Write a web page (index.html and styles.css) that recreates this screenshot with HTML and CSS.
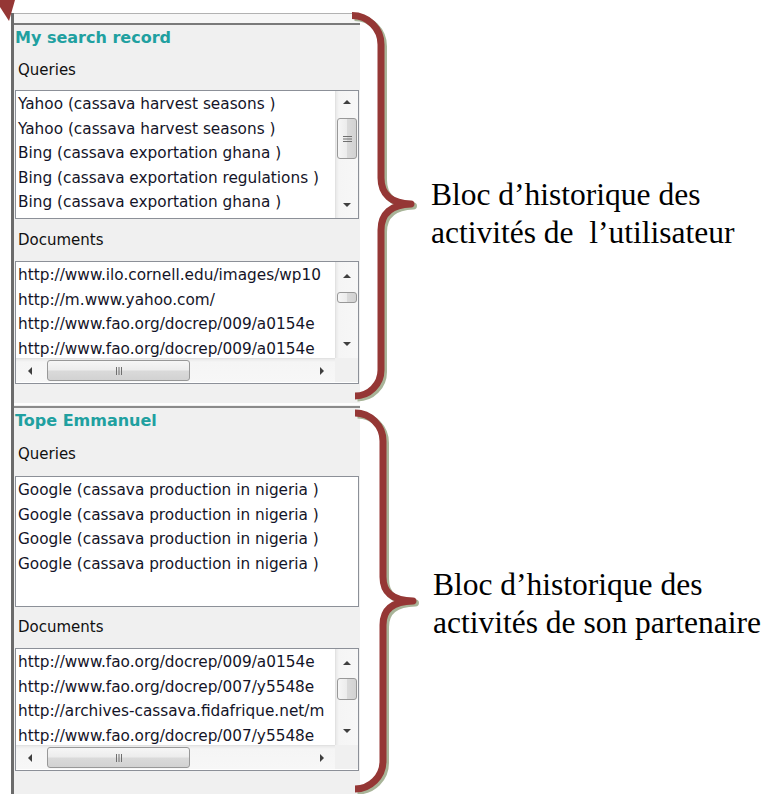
FILE: index.html
```html
<!DOCTYPE html>
<html lang="fr">
<head>
<meta charset="utf-8">
<title>Bloc d'historique</title>
<link rel="stylesheet" href="styles.css">
</head>
<body>
<svg class="arrow" width="16" height="22" viewBox="0 0 16 22"><polygon points="0,0 15,0 9,21 0,7" fill="#953735"/></svg>
<div class="figure">
  <div class="row row-1">
    <section class="panel">
      <div class="panel-top"></div>
      <h2 class="title">My search record</h2>
      <div class="label l-q1">Queries</div>
      <div class="listbox lb-q1">
        <ul class="items">
          <li>Yahoo (cassava harvest seasons )</li>
          <li>Yahoo (cassava harvest seasons )</li>
          <li>Bing (cassava exportation ghana )</li>
          <li>Bing (cassava exportation regulations )</li>
          <li>Bing (cassava exportation ghana )</li>
          <li>Bing (cassava exportation regulations )</li>
        </ul>
        <div class="vscroll">
          <div class="sbtn up-q1"><span class="tri tri-up"></span></div>
          <div class="thumb-v thumb-q1"><svg width="9" height="8" viewBox="0 0 9 8"><path d="M0 1.5h9M0 4h9M0 6.5h9" stroke="#6f6f6f" stroke-width="1"/></svg></div>
          <div class="spacer"></div>
          <div class="sbtn down-q1"><span class="tri tri-down"></span></div>
        </div>
      </div>
      <div class="label l-d1">Documents</div>
      <div class="listbox lb-docs">
        <div class="docs-body">
          <ul class="items docs">
            <li>http://www.ilo.cornell.edu/images/wp10</li>
            <li>http://m.www.yahoo.com/</li>
            <li>http://www.fao.org/docrep/009/a0154e</li>
            <li>http://www.fao.org/docrep/009/a0154e</li>
          </ul>
          <div class="vscroll">
            <div class="sbtn up-d"><span class="tri tri-up"></span></div>
            <div class="thumb-v thumb-d1"></div>
            <div class="spacer"></div>
            <div class="sbtn down-d"><span class="tri tri-down"></span></div>
          </div>
        </div>
        <div class="hscroll-row">
          <div class="hscroll">
            <div class="hbtn hbtn-left"><span class="tri tri-left"></span></div>
            <div class="thumb-h"><svg width="8" height="8" viewBox="0 0 8 8"><path d="M1.5 0v8M4 0v8M6.5 0v8" stroke="#6f6f6f" stroke-width="1"/></svg></div>
            <div class="spacer"></div>
            <div class="hbtn hbtn-right"><span class="tri tri-right"></span></div>
          </div>
          <div class="corner"></div>
        </div>
      </div>
    </section>
    <svg class="brace" width="85" height="403" viewBox="0 0 85 403">
      <path d="M7 15.5 A29 29 0 0 1 36 44.5 V178 C36 194 46 203.5 66 204 C46 204.5 36 214 36 230 V370 A26 26 0 0 1 10 396" transform="translate(2.5 2)" fill="none" stroke="#a8b498" stroke-width="7" stroke-linejoin="round"/>
      <path d="M7 15.5 A29 29 0 0 1 36 44.5 V178 C36 194 46 203.5 66 204 C46 204.5 36 214 36 230 V370 A26 26 0 0 1 10 396" fill="none" stroke="#953735" stroke-width="7" stroke-linejoin="round"/>
    </svg>
    <p class="note note-1">Bloc d’historique des<br>activités de&nbsp; l’utilisateur</p>
  </div>
  <div class="row row-2">
    <section class="panel">
      <div class="panel-top panel-top-2"></div>
      <h2 class="title">Tope Emmanuel</h2>
      <div class="label l-q2">Queries</div>
      <div class="listbox lb-q2">
        <ul class="items">
          <li>Google (cassava production in nigeria )</li>
          <li>Google (cassava production in nigeria )</li>
          <li>Google (cassava production in nigeria )</li>
          <li>Google (cassava production in nigeria )</li>
        </ul>
      </div>
      <div class="label l-d2">Documents</div>
      <div class="listbox lb-docs">
        <div class="docs-body">
          <ul class="items docs">
            <li>http://www.fao.org/docrep/009/a0154e</li>
            <li>http://www.fao.org/docrep/007/y5548e</li>
            <li>http://archives-cassava.fidafrique.net/m</li>
            <li>http://www.fao.org/docrep/007/y5548e</li>
          </ul>
          <div class="vscroll">
            <div class="sbtn up-d"><span class="tri tri-up"></span></div>
            <div class="thumb-v thumb-d2"></div>
            <div class="spacer"></div>
            <div class="sbtn down-d"><span class="tri tri-down"></span></div>
          </div>
        </div>
        <div class="hscroll-row">
          <div class="hscroll">
            <div class="hbtn hbtn-left"><span class="tri tri-left"></span></div>
            <div class="thumb-h"><svg width="8" height="8" viewBox="0 0 8 8"><path d="M1.5 0v8M4 0v8M6.5 0v8" stroke="#6f6f6f" stroke-width="1"/></svg></div>
            <div class="spacer"></div>
            <div class="hbtn hbtn-right"><span class="tri tri-right"></span></div>
          </div>
          <div class="corner"></div>
        </div>
      </div>
    </section>
    <svg class="brace" width="85" height="391" viewBox="0 0 85 391">
      <path d="M10 10 A28 28 0 0 1 38 38 V174 C38 190 48 197.5 68 198 C48 198.5 38 206 38 222 V358 A28 28 0 0 1 10 386" transform="translate(2.5 2)" fill="none" stroke="#a8b498" stroke-width="7" stroke-linejoin="round"/>
      <path d="M10 10 A28 28 0 0 1 38 38 V174 C38 190 48 197.5 68 198 C48 198.5 38 206 38 222 V358 A28 28 0 0 1 10 386" fill="none" stroke="#953735" stroke-width="7" stroke-linejoin="round"/>
    </svg>
    <p class="note note-2">Bloc d’historique des<br>activités de son partenaire</p>
  </div>
</div>
</body>
</html>
```
FILE: styles.css
```css
* { box-sizing: border-box; }
html, body { margin: 0; padding: 0; background: #fff; overflow: hidden; }
body {
  width: 774px;
  height: 794px;
  position: relative;
  font-family: "DejaVu Sans", Verdana, sans-serif;
  color: #111;
}
.arrow { position: absolute; left: 0; top: 0; z-index: 2; }

.figure { padding-left: 11px; }
.row {
  display: grid;
  grid-template-columns: 349px 70px 1fr;
  align-items: start;
}
.brace { display: block; margin-left: -15px; }

.panel {
  background: #f0f0f0;
  border-left: 3px solid #6b6b6b;
}
.row-1 .panel { margin-top: 13px; padding-bottom: 19px; }
.row-2 .panel { padding-bottom: 23px; }

.panel-top {
  height: 12px;
  border-top: 1px solid #b2b2b2;
  border-bottom: 2px solid #7a7a7a;
  background: #f6f6f6;
}
.panel-top-2 {
  height: 5px;
  border-top: 2px solid #fdfdfd;
  border-bottom: 2px solid #8a8a8a;
  background: #f0f0f0;
}

.title {
  margin: 0;
  height: 25px;
  line-height: 25px;
  padding-left: 1px;
  font-size: 16px;
  font-weight: bold;
  color: #20a0a0;
}

.label { padding-left: 4px; font-size: 15px; color: #111; }
.l-q1 { height: 40px; line-height: 40px; }
.l-d1 { height: 42px; line-height: 42px; }
.l-q2 { height: 43px; line-height: 43px; }
.l-d2 { height: 41px; line-height: 41px; }

.listbox {
  margin-left: 1px;
  width: 344px;
  border: 1px solid #8c9098;
  background: #fff;
  display: flex;
  overflow: hidden;
}
.lb-q1 { height: 129px; }
.lb-q2 { height: 131px; }
.lb-docs { height: 123px; flex-direction: column; }

.items {
  list-style: none;
  margin: 0;
  padding: 1px 0 0 2px;
  flex: 1;
  min-width: 0;
  overflow: hidden;
  font-size: 15.3px;
  line-height: 24.6px;
  white-space: nowrap;
  color: #141428;
}
.items.docs { line-height: 24.5px; }

.docs-body { display: flex; height: 96px; }

.vscroll {
  width: 23px;
  flex: none;
  display: flex;
  flex-direction: column;
  background: linear-gradient(to right, #e9e9e9, #f5f5f5 3px, #f7f7f7);
  border-left: 1px solid #e2e2e2;
}
.spacer { flex: 1; }
.sbtn { flex: none; display: flex; justify-content: center; }
.up-q1 { height: 22px; align-items: center; }
.down-q1 { height: 22px; align-items: center; padding-bottom: 4px; }
.up-d { height: 23px; align-items: center; padding-top: 4px; }
.down-d { height: 23px; align-items: center; padding-bottom: 6px; }

.tri { width: 0; height: 0; display: block; }
.tri-up { border-left: 4px solid transparent; border-right: 4px solid transparent; border-bottom: 4px solid #3f3f3f; }
.tri-down { border-left: 4px solid transparent; border-right: 4px solid transparent; border-top: 4px solid #3f3f3f; }
.tri-left { border-top: 4px solid transparent; border-bottom: 4px solid transparent; border-right: 4px solid #3f3f3f; }
.tri-right { border-top: 4px solid transparent; border-bottom: 4px solid transparent; border-left: 4px solid #3f3f3f; }

.thumb-v {
  flex: none;
  margin: 0 1px 0 1px;
  border: 1px solid #989898;
  border-radius: 3px;
  background: linear-gradient(to right, #f6f6f6, #ececec 48%, #dadada 52%, #d2d2d2);
  display: flex;
  align-items: center;
  justify-content: center;
}
.thumb-q1 { margin-top: 5px; height: 41px; }
.thumb-d1 { margin-top: 7px; height: 11px; }
.thumb-d2 { margin-top: 6px; height: 22px; }

.hscroll-row { display: flex; height: 24px; }
.hscroll {
  flex: 1;
  display: flex;
  align-items: center;
  background: linear-gradient(to bottom, #e9e9e9, #f5f5f5 3px, #f7f7f7);
  border-top: 1px solid #e2e2e2;
}
.hbtn { flex: none; height: 100%; display: flex; align-items: center; justify-content: center; }
.hbtn-left { width: 28px; }
.hbtn-right { width: 26px; }
.thumb-h {
  flex: none;
  margin-left: 3px;
  width: 143px;
  height: 21px;
  border: 1px solid #989898;
  border-radius: 3px;
  background: linear-gradient(to bottom, #f6f6f6, #ececec 48%, #dadada 52%, #d2d2d2);
  display: flex;
  align-items: center;
  justify-content: center;
}
.corner { width: 23px; flex: none; background: #f0f0f0; }

.note {
  margin: 0;
  font-family: "Liberation Serif", "Times New Roman", serif;
  font-size: 31.5px;
  line-height: 38px;
  color: #000;
  white-space: nowrap;
}
.note-1 { padding-top: 176px; padding-left: 1px; }
.note-2 { padding-top: 163px; padding-left: 3px; }
```
